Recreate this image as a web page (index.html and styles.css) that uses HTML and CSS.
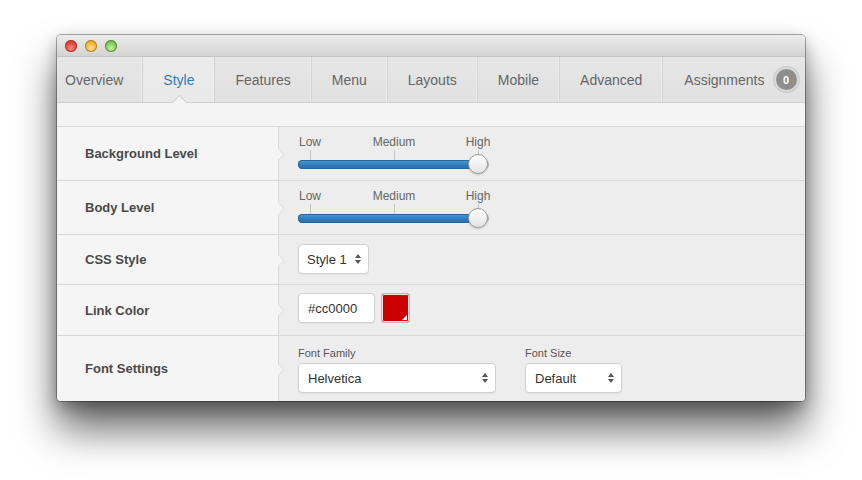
FILE: index.html
```html
<!DOCTYPE html>
<html>
<head>
<meta charset="utf-8">
<link rel="stylesheet" href="styles.css">
</head>
<body>
<div class="window">
  <div class="titlebar">
    <span class="light red"></span><span class="light yellow"></span><span class="light green"></span>
  </div>
  <div class="tabs">
    <div class="tab first">Overview</div>
    <div class="tab active">Style</div>
    <div class="tab">Features</div>
    <div class="tab">Menu</div>
    <div class="tab">Layouts</div>
    <div class="tab">Mobile</div>
    <div class="tab">Advanced</div>
    <div class="tab last">Assignments <span class="badge">0</span></div>
  </div>
  <div class="subbar"></div>
  <div class="rows">
    <div class="row h54">
      <div class="label">Background Level</div>
      <div class="field pt8">
        <div class="slider">
          <div class="marks"><span class="mark">Low</span><span class="mark">Medium</span><span class="mark">High</span></div>
          <div class="track"><div class="fill"></div><div class="knob"></div></div>
        </div>
      </div>
    </div>
    <div class="row h54">
      <div class="label">Body Level</div>
      <div class="field pt8">
        <div class="slider">
          <div class="marks"><span class="mark">Low</span><span class="mark">Medium</span><span class="mark">High</span></div>
          <div class="track"><div class="fill"></div><div class="knob"></div></div>
        </div>
      </div>
    </div>
    <div class="row h50">
      <div class="label">CSS Style</div>
      <div class="field pt9">
        <div class="select w70">Style 1<svg class="arrows" width="6" height="10" viewBox="0 0 6 10"><path d="M3 0L6 4H0Z M3 10L6 6H0Z" fill="#555"/></svg></div>
      </div>
    </div>
    <div class="row h51">
      <div class="label">Link Color</div>
      <div class="field pt8 inline">
        <div class="input">#cc0000</div>
        <div class="swatch"><span class="corner"></span></div>
      </div>
    </div>
    <div class="row last-row">
      <div class="label">Font Settings</div>
      <div class="field pt11 inline gap29">
        <div class="group">
          <div class="small">Font Family</div>
          <div class="select w198">Helvetica<svg class="arrows" width="6" height="10" viewBox="0 0 6 10"><path d="M3 0L6 4H0Z M3 10L6 6H0Z" fill="#555"/></svg></div>
        </div>
        <div class="group">
          <div class="small">Font Size</div>
          <div class="select w97">Default<svg class="arrows" width="6" height="10" viewBox="0 0 6 10"><path d="M3 0L6 4H0Z M3 10L6 6H0Z" fill="#555"/></svg></div>
        </div>
      </div>
    </div>
  </div>
</div>
</body>
</html>
```
FILE: styles.css
```css
* { box-sizing: border-box; }
html, body { margin: 0; padding: 0; background: #fff; }
body { font-family: "Liberation Sans", Arial, Helvetica, sans-serif; color: #333; min-height: 480px; padding-top: 35px; }

.window {
  margin: 0 0 0 57px;
  width: 748px;
  height: 366px;
  border-radius: 4px;
  overflow: hidden;
  background: #ededed;
  box-shadow: 0 0 0 1px rgba(0,0,0,0.3), 0 28px 40px rgba(0,0,0,0.6), 0 6px 16px rgba(0,0,0,0.3);
  display: flex;
  flex-direction: column;
}

.titlebar {
  height: 22px;
  flex: none;
  background: linear-gradient(#ececec, #d3d3d3);
  display: flex;
  align-items: center;
  padding-left: 8px;
  gap: 8px;
  border-bottom: 1px solid #c4c4c4;
}
.light {
  width: 12px; height: 12px; border-radius: 50%;
  display: inline-block;
}
.red { background: radial-gradient(circle at 50% 70%, #ff8a80, #e0443b 55%, #b4261e); box-shadow: inset 0 0 0 1px #b3382f; }
.yellow { background: radial-gradient(circle at 50% 70%, #ffe08a, #f0b33a 55%, #c98a14); box-shadow: inset 0 0 0 1px #b98524; }
.green { background: radial-gradient(circle at 50% 70%, #c8f29c, #80c95a 55%, #4f9a32); box-shadow: inset 0 0 0 1px #5a9240; }

.tabs {
  height: 46px;
  flex: none;
  display: flex;
  background: linear-gradient(#e6e6e6, #e1e1e1);
  border-bottom: 1px solid #cfcfcf;
}
.tab {
  position: relative;
  display: flex;
  align-items: center;
  padding: 0 20px;
  font-size: 14px;
  color: #666;
  border-right: 1px solid #d2d2d2;
  box-shadow: inset -1px 0 0 #eeeeee;
}
.tab.first { padding-left: 8px; padding-right: 19px; }
.tab.active {
  color: #2f7cc0;
  background: linear-gradient(#ebebeb, #e9e9e9);
}
.tab.active::after {
  content: "";
  position: absolute;
  left: 50%;
  bottom: -6px;
  width: 10px; height: 10px;
  margin-left: -5px;
  background: #f4f4f4;
  border-left: 1px solid #cfcfcf;
  border-top: 1px solid #cfcfcf;
  transform: rotate(45deg);
}
.tab.last { flex: 1; border-right: none; box-shadow: none; padding-left: 21px; }
.badge {
  margin-left: 9px;
  width: 25px; height: 25px;
  border-radius: 50%;
  background: #8e8e8e;
  border: 2px solid #d9d9d9;
  color: #fff;
  font-size: 11px;
  font-weight: bold;
  display: flex; align-items: center; justify-content: center;
  box-shadow: 0 0 0 1px #c9c9c9;
}

.subbar {
  height: 24px;
  flex: none;
  background: #f4f4f4;
  border-bottom: 1px solid #dadada;
  position: relative;
  z-index: 1;
}

.rows { flex: 1; display: flex; flex-direction: column; }
.row {
  display: flex;
  flex: none;
  border-bottom: 1px solid #d8d8d8;
  box-shadow: 0 1px 0 #fafafa;
}
.row.last-row { border-bottom: none; box-shadow: none; flex: 1; }
.h54 { height: 54px; }
.h50 { height: 50px; }
.h51 { height: 51px; }

.label {
  position: relative;
  width: 222px;
  flex: none;
  background: #f5f5f5;
  border-right: 1px solid #dadada;
  display: flex;
  align-items: center;
  padding-left: 28px;
  font-size: 13px;
  font-weight: bold;
  color: #4a4a4a;
}
.label::after {
  content: "";
  position: absolute;
  right: -5px;
  top: 50%;
  width: 8px; height: 8px;
  margin-top: -4px;
  background: #f5f5f5;
  border-right: 1px solid #dedede;
  border-top: 1px solid #dedede;
  transform: rotate(45deg);
}

.field { flex: 1; padding-left: 19px; background: #ededed; }
.pt8 { padding-top: 8px; }
.pt9 { padding-top: 9px; }
.pt11 { padding-top: 11px; }
.inline { display: flex; align-items: flex-start; gap: 6px; }
.gap29 { gap: 29px; }

.slider { width: 192px; position: relative; }
.marks { display: flex; gap: 44px; margin-left: -8px; width: 208px; }
.mark {
  flex: none;
  width: 40px;
  display: flex; flex-direction: column; align-items: center;
  font-size: 12px; line-height: 14px; color: #666;
}
.mark::after {
  content: "";
  width: 1px; height: 10px;
  margin-top: 1px;
  background: #c4c4c4;
}
.track {
  position: relative;
  height: 9px;
  width: 191px;
  border-radius: 5px;
  background: linear-gradient(#e0e0e0, #cfcfcf);
  box-shadow: inset 0 0 0 1px #b8b8b8;
}
.fill {
  width: 181px; height: 9px;
  border-radius: 5px;
  background: linear-gradient(#4a9bd6, #2f7ab8 60%, #2a6ea8);
  box-shadow: inset 0 0 0 1px #25669c;
}
.knob {
  position: absolute;
  left: 170px; top: -6px;
  width: 20px; height: 20px;
  border-radius: 50%;
  background: linear-gradient(#ffffff, #e3e3e3);
  border: 1px solid #9c9c9c;
  box-shadow: 0 1px 2px rgba(0,0,0,0.2);
}

.select, .input {
  height: 30px;
  background: #fff;
  border: 1px solid #d0d0d0;
  border-radius: 4px;
  display: flex;
  align-items: center;
  font-size: 13px;
  color: #333;
  padding-left: 8px;
  position: relative;
  box-shadow: 0 1px 1px rgba(0,0,0,0.05);
}
.select { justify-content: space-between; padding-right: 7px; }
.w70 { width: 71px; }
.w198 { width: 198px; }
.w97 { width: 97px; }
.input { width: 77px; padding-left: 9px; }
.arrows { flex: none; }

.swatch {
  width: 29px; height: 30px;
  border: 1px solid #d8b0b0;
  border-radius: 3px;
  background: #cc0000;
  box-shadow: inset 0 0 0 1px #f2dede;
  position: relative;
}
.corner {
  position: absolute;
  right: 2px; bottom: 2px;
  width: 0; height: 0;
  border-left: 5px solid transparent;
  border-bottom: 5px solid #f3f3f3;
}

.group { display: flex; flex-direction: column; gap: 4px; }
.small { font-size: 11px; line-height: 12px; color: #555; }
.group .select { padding-left: 9px; }
```
